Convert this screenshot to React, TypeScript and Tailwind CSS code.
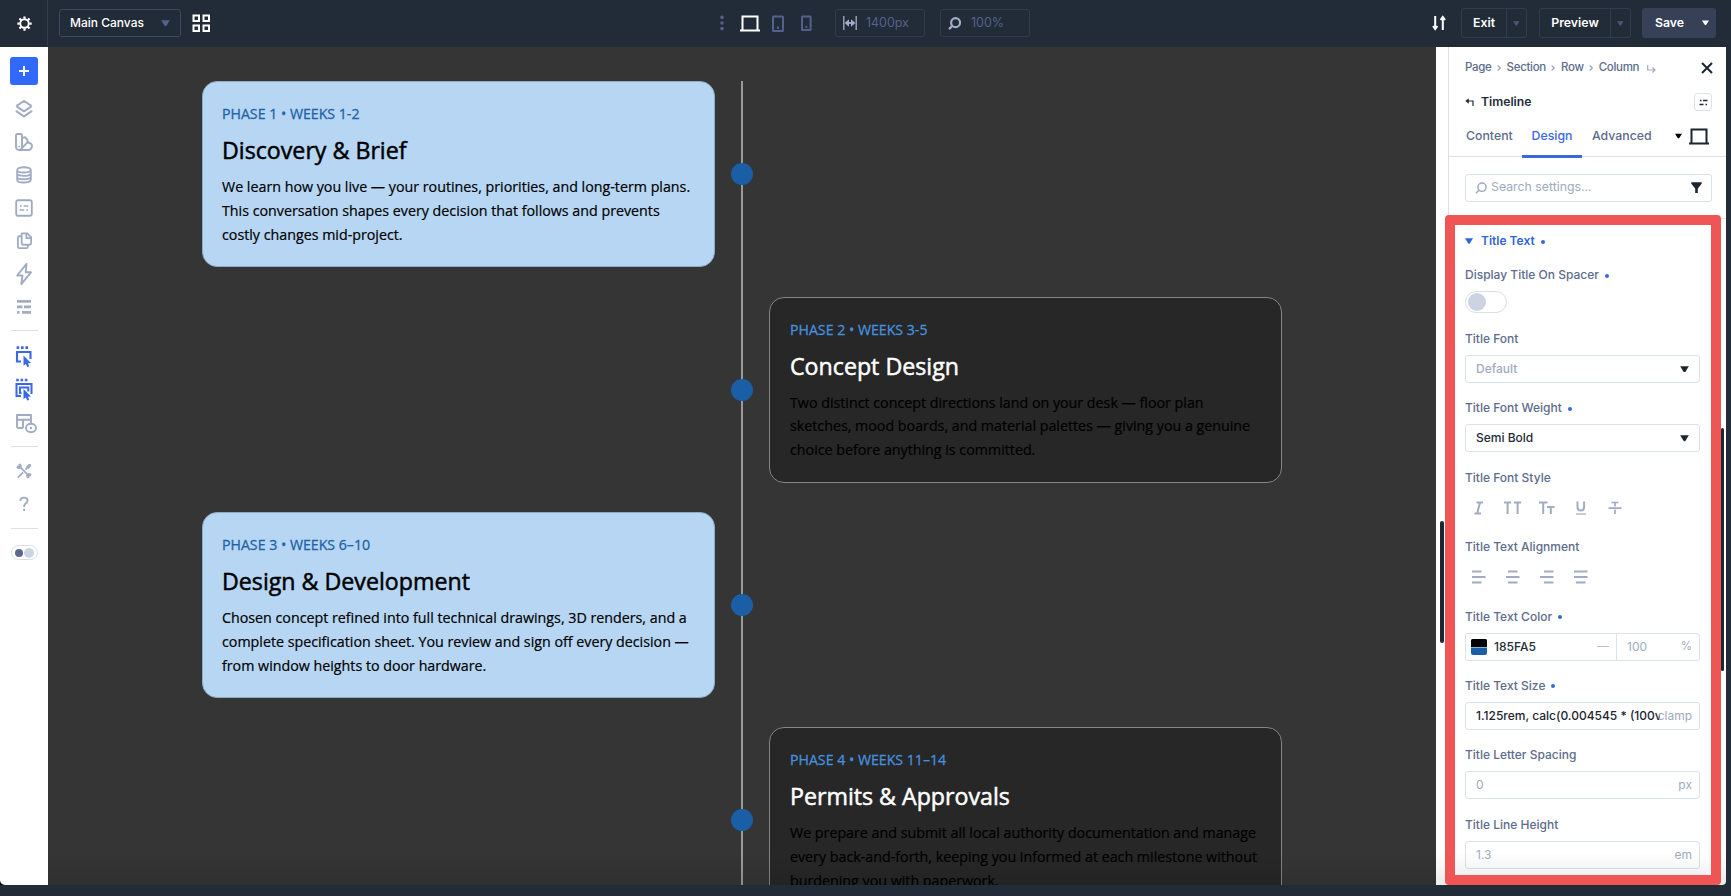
import type { ReactNode } from 'react';
import clsx from 'clsx';

const phases = [
  {
    label: 'PHASE 1 • WEEKS 1-2',
    title: 'Discovery & Brief',
    lines: [
      'We learn how you live — your routines, priorities, and long-term plans.',
      'This conversation shapes every decision that follows and prevents',
      'costly changes mid-project.',
    ],
  },
  {
    label: 'PHASE 2 • WEEKS 3-5',
    title: 'Concept Design',
    lines: [
      'Two distinct concept directions land on your desk — floor plan',
      'sketches, mood boards, and material palettes — giving you a genuine',
      'choice before anything is committed.',
    ],
  },
  {
    label: 'PHASE 3 • WEEKS 6–10',
    title: 'Design & Development',
    lines: [
      'Chosen concept refined into full technical drawings, 3D renders, and a',
      'complete specification sheet. You review and sign off every decision —',
      'from window heights to door hardware.',
    ],
  },
  {
    label: 'PHASE 4 • WEEKS 11–14',
    title: 'Permits & Approvals',
    lines: [
      'We prepare and submit all local authority documentation and manage',
      'every back-and-forth, keeping you informed at each milestone without',
      'burdening you with paperwork.',
    ],
  },
];

function Caret({ className }: { className?: string }) {
  return (
    <svg viewBox="0 0 8 6" className={clsx('shrink-0', className)} fill="currentColor">
      <path d="M0 .3h8L4.9 5.2q-.9 1-1.8 0z" />
    </svg>
  );
}

function Laptop({ className }: { className?: string }) {
  return (
    <svg viewBox="0 0 20 17" className={clsx('shrink-0', className)} fill="none" stroke="currentColor" strokeWidth="2">
      <path d="M2.5 15V1.5h15V15M0 15.5h20" />
    </svg>
  );
}

function SearchIcon({ className }: { className?: string }) {
  return (
    <svg viewBox="0 0 12 12" className={clsx('shrink-0', className)} fill="none" stroke="currentColor">
      <circle cx="7" cy="5.2" r="4.1" />
      <path d="M4 8.2L.9 11.2" />
    </svg>
  );
}

/* ---------- Top bar ---------- */

function SplitButton({ label, className }: { label: string; className: string }) {
  return (
    <div className={clsx('flex h-[30px] rounded-[3px] border border-[#303c4f] text-white', className)}>
      <span className="flex flex-1 items-center justify-center text-[12.3px] font-semibold">{label}</span>
      <span className="flex w-[20px] items-center justify-center border-l border-[#303c4f] text-[#4a5876]">
        <Caret className="h-[5px] w-[6.5px]" />
      </span>
    </div>
  );
}

function TopBar() {
  return (
    <header className="flex h-[47px] shrink-0 items-center pb-px">
      <div className="flex h-full w-12 shrink-0 items-center justify-center border-r border-[#2f3c4b] text-white">
        <svg viewBox="0 0 16 16" className="ml-px h-[15px] w-[15px]" fill="none" stroke="currentColor">
          <circle cx="8" cy="8" r="4.5" strokeWidth="2" />
          <path
            strokeWidth="2.4"
            d="M8 .4v2.6M8 13v2.6M.4 8H3M13 8h2.6M2.6 2.6l1.9 1.9M11.5 11.5l1.9 1.9M2.6 13.4l1.9-1.9M11.5 4.5l1.9-1.9"
          />
        </svg>
      </div>
      <div className="ml-[11px] flex h-7 w-[122px] items-center justify-between rounded-[3px] border border-[#3b4963] px-[10px]">
        <span className="whitespace-nowrap text-[12px] font-medium text-white">Main Canvas</span>
        <Caret className="h-[6.5px] w-[9px] text-[#53618c]" />
      </div>
      <svg viewBox="0 0 19 19" className="ml-[11px] h-[19px] w-[19px] text-white" fill="none" stroke="currentColor" strokeWidth="2">
        <path d="M1.5 1.5h5.5V7H1.5zM11.5 1.5h5.5V7h-5.5zM1.5 11.5h5.5V17H1.5zM11.5 11.5h5.5V17h-5.5z" />
      </svg>

      <div className="ml-[509px] flex items-center text-[#53618c]">
        <svg viewBox="0 0 4 16" className="h-4 w-1" fill="currentColor">
          <circle cx="2" cy="2.4" r="1.8" />
          <circle cx="2" cy="8" r="1.8" />
          <circle cx="2" cy="13.6" r="1.8" />
        </svg>
        <Laptop className="ml-4 h-[17px] w-5 text-white" />
        <svg viewBox="0 0 12 17" className="ml-3 h-[17px] w-3" fill="none" stroke="currentColor" strokeWidth="2">
          <rect x="1" y="1.5" width="10" height="14.5" rx=".5" />
          <path d="M6 11.5V14" />
        </svg>
        <svg viewBox="0 0 11 16" className="ml-[17px] h-4 w-[11px]" fill="none" stroke="currentColor" strokeWidth="2">
          <rect x="1" y="1.5" width="8.6" height="13.5" rx=".5" />
          <path d="M5.3 10.8v2" />
        </svg>
        <div className="ml-[23px] flex h-7 w-[90px] items-center rounded-[3px] border border-[#303c4f] pl-[7px]">
          <svg viewBox="0 0 14 14" className="h-[14px] w-[14px] text-[#a2aec8]" fill="none" stroke="currentColor">
            <path d="M.8 0v14M13.2 0v14" strokeWidth="1.3" />
            <path d="M3 7h8" strokeWidth="1.8" />
            <path d="M1.6 7L6 3.2v7.6zM12.4 7L8 3.2v7.6z" fill="currentColor" stroke="none" />
          </svg>
          <span className="ml-[9px] text-[12.5px] tracking-[-0.05px]">1400px</span>
        </div>
        <div className="ml-[15px] flex h-7 w-[90px] items-center rounded-[3px] border border-[#303c4f] pl-[7px]">
          <SearchIcon className="h-[13px] w-[13px] stroke-2 text-[#a2aec8]" />
          <span className="ml-[10px] text-[12.5px]">100%</span>
        </div>
      </div>

      <svg viewBox="0 0 14 16" className="ml-auto mr-[15px] h-4 w-[14px] text-white" fill="none" stroke="currentColor" strokeWidth="2">
        <path d="M3.2 1v13M1 11l2.2 3 2.2-3M10.8 15V2M8.6 5l2.2-3L13 5" />
      </svg>
      <SplitButton label="Exit" className="w-[66px]" />
      <SplitButton label="Preview" className="ml-3 w-[92px]" />
      <div className="ml-[11px] mr-[15px] flex h-[30px] w-[74px] items-center justify-between rounded-[3px] bg-[#364158] pl-[13px] pr-[7px] text-white">
        <span className="text-[12.3px] font-semibold">Save</span>
        <Caret className="h-[5.5px] w-[7px]" />
      </div>
    </header>
  );
}

/* ---------- Left rail ---------- */

function RailIcon({ children, active, className = 'h-[18px] w-[18px]' }: { children: ReactNode; active?: boolean; className?: string }) {
  return (
    <div className={clsx('flex h-[33.1px] w-7 items-center justify-center', active ? 'text-[#3a68e8]' : 'text-[#a2abc4]')}>
      <svg viewBox="0 0 18 18" className={clsx('overflow-visible', className)} fill="none" stroke="currentColor" strokeWidth="1.9" strokeLinejoin="round">
        {children}
      </svg>
    </div>
  );
}

function Divider({ className }: { className: string }) {
  return (
    <div className={clsx('flex items-center', className)}>
      <div className="h-px w-[27px] bg-[#dcdfe8]" />
    </div>
  );
}

function LeftRail() {
  return (
    <aside className="flex w-12 shrink-0 flex-col items-center rounded-bl-[5px] bg-white pt-[10px]">
      <div className="mb-[7px] flex h-[28px] w-[28px] shrink-0 items-center justify-center rounded-[3px] bg-[#3069fb]">
        <svg viewBox="0 0 10 10" className="h-[10px] w-[10px]" stroke="white" strokeWidth="1.9">
          <path d="M5 0v10M0 5h10" />
        </svg>
      </div>
      <RailIcon>
        <path d="M9 1l7 4.6v1L9 11.4 2 6.6v-1z" />
        <path d="M1.6 10.4v1L9 16.4l7.4-5v-1" />
      </RailIcon>
      <RailIcon>
        <path d="M7 4V14a3 3 0 0 1-6 0V2.5Q1 1 2.5 1H5.5Q7 1 7 2.5z" />
        <path d="M7 5.5l1.5-1q1.5-.8 2.5.6l1.5 2.2q.8 1.3-.4 2.3L6.5 15.5M12.5 9.5l1.8.3q3 1 2.7 3.5-.2 3-3.2 3.7H4" />
        <path d="M4 13v1.2" />
      </RailIcon>
      <RailIcon>
        <path d="M2.2 4v10c0 3.4 13.6 3.4 13.6 0V4M2.2 4c0-3.6 13.6-3.6 13.6 0s-13.6 3.2-13.6 0zM2.2 7.6c0 3 13.6 3 13.6 0M2.2 11c0 3 13.6 3 13.6 0" />
      </RailIcon>
      <RailIcon>
        <rect x="1.2" y="1.2" width="15.6" height="15.6" rx="2" />
        <path strokeWidth="1.7" d="M5 7h1.7M8.7 7h4.5M4.7 11h4.5M11.3 11H13" />
      </RailIcon>
      <RailIcon className="h-[17px] w-[17px]">
        <path d="M6 1.5h6l4 4V12q0 1.5-1.5 1.5H7.5Q6 13.5 6 12z" />
        <path d="M11 1.5V6.5h5M6 4.5H3.5Q2 4.5 2 6v9.5Q2 17 3.5 17h7.5q1.5 0 1.5-1.5v-2" />
      </RailIcon>
      <RailIcon>
        <path d="M11.5-1.2L2.2 10.5h5.3L6.3 19.2 16 7.3h-5.3z" />
      </RailIcon>
      <RailIcon>
        <path strokeWidth="2.8" strokeLinejoin="miter" d="M2 3.3h14M2 8.9h5.5M9 8.9h7M2 14.3h2.5M7 14.3h9" />
      </RailIcon>
      <Divider className="mb-[3px] h-[14px]" />
      <RailIcon active>
        <path strokeWidth="2.6" d="M1.6-.4h2.6M6-.4h2.6M10.4-.4h2.6" />
        <path strokeWidth="2.1" strokeLinejoin="miter" d="M6 13.5H2V4h13.5v7" />
        <path d="M8.5 7.5l7.5 7.5-3 .3 1.2 3-2 .8-1.3-3.2-2.4 1.6z" fill="currentColor" stroke="none" />
      </RailIcon>
      <RailIcon active>
        <path strokeWidth="2.6" d="M1.2-1h2.6M5.5-1h2.6M9.8-1h2.6" />
        <path strokeWidth="2" strokeLinejoin="miter" d="M6 15H1.5V3h15v10M6.5 12H4.9V6.4h8.4v4" />
        <path d="M8.5 8l7.5 7.5-3 .3 1.2 3-2 .8-1.3-3.2-2.4 1.6z" fill="currentColor" stroke="none" />
      </RailIcon>
      <RailIcon>
        <path d="M8 14H3.2Q2 14 2 12.8V1h14v8M2 5.8h14M8 6v8" />
        <ellipse cx="16" cy="14" rx="5" ry="4.2" fill="white" />
        <circle cx="16" cy="14" r="1.2" fill="currentColor" stroke="none" />
      </RailIcon>
      <Divider className="mb-0.5 h-[13px]" />
      <RailIcon className="h-4 w-4">
        <path strokeWidth="2" d="M2 16.5L8 10.5M10.5 7.5L16.5 1.5" />
        <path strokeWidth="2" d="M5 5l8 8M4 1v3H1M1 4.5q2.5 2.5 4.5.2Q6 2.5 4 1M14 17v-3h3M17 13.5q-2.5-2.5-4.5-.2Q12 15.5 14 17" />
        <path strokeWidth="3.6" d="M12.5 5.5l3.5-3.5" />
      </RailIcon>
      <RailIcon>
        <path d="M5.4 5q0-3.4 3.7-3.4 3.5 0 3.5 3 0 1.7-1.9 2.9Q9.1 8.5 9.1 10.4v.6M9.1 12.8v2.2" />
      </RailIcon>
      <Divider className="mb-0.5 h-[14px]" />
      <div className="mt-2 flex h-[15px] w-[27px] items-center justify-between rounded-full border border-[#d9dfe9] px-[3px]">
        <span className="h-[8px] w-[8px] rounded-full bg-[#5b678d]" />
        <span className="h-[10px] w-[10px] rounded-full bg-[#ccd3e1]" />
      </div>
    </aside>
  );
}

/* ---------- Canvas ---------- */

function PhaseCard({ phase, dark }: { phase: (typeof phases)[number]; dark: boolean }) {
  return (
    <article
      className={clsx(
        'flex h-[186px] w-[513px] shrink-0 flex-col rounded-[15px] border pr-5 pt-5',
        dark ? 'border-[#858585] bg-[#272727] pl-5' : 'border-[#8fa9c4] bg-[#b6d6f3] pl-[19px]'
      )}
    >
      <p
        className={clsx(
          'h-6 whitespace-nowrap text-[14.15px] leading-6 [-webkit-text-stroke:0.3px]',
          dark ? 'text-[#4590de]' : 'text-[#1f63a8]'
        )}
      >
        {phase.label}
      </p>
      <h2
        className={clsx(
          'mt-[8px] h-8 whitespace-nowrap text-[23.2px] leading-8 [-webkit-text-stroke:0.5px]',
          dark ? 'text-white' : 'text-black'
        )}
      >
        {phase.title}
      </h2>
      <p className="mt-[9px] text-[14.25px] leading-[23.8px] text-black [-webkit-text-stroke:0.2px]">
        {phase.lines.map((line) => (
          <span key={line} className="block whitespace-nowrap">
            {line}
          </span>
        ))}
      </p>
    </article>
  );
}

function Canvas() {
  return (
    <main className="relative flex min-w-0 flex-1 justify-center overflow-hidden bg-[#353535] pt-[34.4px] font-['Open_Sans',sans-serif]">
      <div className="relative flex w-[1080px] shrink-0 flex-col gap-[29.3px]">
        <div className="absolute left-[539px] top-0 h-[820px] w-[2px] bg-[#9a9a9a]" />
        {phases.map((phase, i) => (
          <section key={phase.title} className={clsx('relative flex shrink-0 items-center', i % 2 === 1 && 'justify-end')}>
            <PhaseCard phase={phase} dark={i % 2 === 1} />
            <span className="absolute left-[529px] top-[82px] h-[22px] w-[22px] rounded-full bg-[#1a5fa6]" />
          </section>
        ))}
      </div>
      <div className="absolute inset-x-0 bottom-0 h-8 bg-linear-to-t from-black/10 to-transparent" />
    </main>
  );
}

/* ---------- Settings panel ---------- */

function Field({ label, modified, className = 'mb-[17.4px]', children }: { label: string; modified?: boolean; className?: string; children: ReactNode }) {
  return (
    <div className={className}>
      <div className="mb-2 flex h-4 items-center text-[12px] font-medium text-[#5d6b8c]">
        <span className="whitespace-nowrap">{label}</span>
        {modified && <i className="ml-[6px] mt-px h-1 w-1 rounded-full bg-[#3569e0]" />}
      </div>
      {children}
    </div>
  );
}

const inputBox = 'flex h-7 w-[235px] items-center rounded-[3px] border border-[#dde1ea] text-[12px] font-medium';

function Select({ value, placeholder }: { value: string; placeholder?: boolean }) {
  return (
    <div className={clsx(inputBox, 'justify-between px-[10px]', placeholder ? 'text-[#a0aabf]' : 'text-[#222b37]')}>
      {value}
      <Caret className="h-[6.5px] w-[9px] text-[#1d2530]" />
    </div>
  );
}

function UnitInput({ value, unit }: { value: string; unit: string }) {
  return (
    <div className={clsx(inputBox, 'justify-between pl-[10px] pr-[7px] text-[#a0aabf]')}>
      <span className="font-normal">{value}</span>
      <span className="font-normal">{unit}</span>
    </div>
  );
}

function FontStyleIcons() {
  return (
    <div className="flex h-7 items-center pl-[5px] text-[#a2abc4]">
      <svg viewBox="0 0 160 18" className="h-[18px] w-[160px]" fill="none" stroke="currentColor" strokeWidth="2">
        <path d="M6.5 3.5h6.5M4.5 14.5h6.5M10 3.5L7.2 14.5" />
        <path d="M34 3.5h7.2M37.6 3.5V15M44 3.5h7.2M47.6 3.5V15" />
        <path d="M69 3.5h8.5M73.2 3.5V15M77 8h7.5M80.8 8v7" />
        <path d="M107.5 2.5v5.6q0 3.4 3.3 3.4t3.3-3.4V2.5" />
        <path d="M106 15h10" strokeWidth="1.2" />
        <path d="M141.5 3.5h7M145 3.5v4M145 10.5v4.5M138.5 9.2h13" strokeWidth="1.7" />
      </svg>
    </div>
  );
}

function AlignIcons() {
  return (
    <div className="flex h-7 items-center pl-[5px] text-[#a2abc4]">
      <svg viewBox="0 0 130 16" className="h-4 w-[130px]" fill="none" stroke="currentColor" strokeWidth="1.9">
        <path d="M2 2.5h9.5M2 8h13.5M2 13.5h9.5" />
        <path d="M38 2.5h9.5M36 8h13.5M38 13.5h9.5" />
        <path d="M74 2.5h9.5M70 8h13.5M74 13.5h9.5" />
        <path d="M104 2.5h13.5M104 8h13.5M106 13.5h9.5" />
      </svg>
    </div>
  );
}

function PanelHeader() {
  return (
    <div className="h-[110px] shrink-0 border-b border-[#dcdfe8]">
      <div className="flex h-[42px] items-center pl-4 pr-[13px] text-[11.5px] font-medium tracking-[-0.3px] text-[#5d6b8c]">
        {['Page', 'Section', 'Row', 'Column'].map((crumb, i) => (
          <span key={crumb} className="flex items-center">
            {i > 0 && (
              <svg viewBox="0 0 4 6" className="mx-[5.5px] h-[6px] w-[4px]" fill="none" stroke="#9aa4bd" strokeWidth="1.2">
                <path d="M.6 .5L3.3 3 .6 5.5" />
              </svg>
            )}
            {crumb}
          </span>
        ))}
        <svg viewBox="0 0 9 8" className="ml-2 mt-px h-2 w-[9px]" fill="none" stroke="#a2abc4" strokeWidth="1.2">
          <path d="M.7 0v5h7M5.5 2.5L8 5 5.5 7.5" />
        </svg>
        <svg viewBox="0 0 12 12" className="ml-auto h-3 w-3" stroke="#1d2530" strokeWidth="2">
          <path d="M1 1l10 10M11 1L1 11" />
        </svg>
      </div>
      <div className="flex h-[26px] items-center pl-4 pr-[14px]">
        <svg viewBox="0 0 9 8" className="h-2 w-[9px]" fill="none" stroke="#222b37" strokeWidth="1.2">
          <path d="M8 8V3H1.5" />
          <path d="M3.8 .3v5.4L.3 3z" fill="#222b37" stroke="none" />
        </svg>
        <span className="ml-[7px] text-[12.2px] font-semibold text-[#222b37]">Timeline</span>
        <div className="ml-auto flex h-[18px] w-[18px] items-center justify-center rounded-[3px] border border-[#dde1ea]">
          <svg viewBox="0 0 9 7" className="h-[7px] w-[9px]" stroke="#222b37" strokeWidth="1.6">
            <path d="M1 1.5h1.5M4 1.5h4.5M.5 5.5h4M6.5 5.5H8" />
          </svg>
        </div>
      </div>
      <div className="flex h-[42px] items-stretch pl-4 pr-[17px] text-[12.3px] font-medium text-[#5d6b8c]">
        <span className="flex w-[57px] items-center pl-px">Content</span>
        <span className="relative flex w-[60px] items-center justify-center text-[#3a68e8]">
          Design
          <i className="absolute inset-x-0 -bottom-px h-[3px] bg-[#3a68d8]" />
        </span>
        <span className="flex items-center pl-[10px]">Advanced</span>
        <span className="ml-auto flex items-center gap-[7px] text-[#1d2530]">
          <Caret className="h-[6px] w-[7px] text-black" />
          <Laptop className="h-[17px] w-5" />
        </span>
      </div>
    </div>
  );
}

function SettingsPanel() {
  return (
    <aside className="relative flex w-[290px] shrink-0 rounded-br-[4px] bg-white">
      <div className="w-3 shrink-0 pl-[4px] pt-[474px]">
        <div className="h-[122px] w-[4px] rounded-full bg-[#1d2733]" />
      </div>
      <div className="flex min-w-0 flex-1 flex-col overflow-hidden border-l border-[#dcdfe8]">
        <PanelHeader />
        <div className="flex h-[62px] shrink-0 items-center border-b border-[#e4e7ee] pl-4">
          <div className="flex h-7 w-[247px] items-center rounded-[3px] border border-[#dde1ea] px-[9px] text-[12.3px] text-[#a0aabf]">
            <SearchIcon className="h-3 w-3 stroke-[1.5px]" />
            <span className="ml-1">Search settings...</span>
            <svg viewBox="0 0 11 11" className="ml-auto h-[11px] w-[11px]" fill="#1d2530">
              <path d="M.3 .3h10.4v1.4L6.8 6.5V11H4.2V6.5L.3 1.7z" />
            </svg>
          </div>
        </div>
        <div className="pl-4 pt-[14px]">
          <div className="mb-[18px] flex h-4 items-center text-[12px] font-semibold text-[#3063dc]">
            <Caret className="h-[6px] w-[8px]" />
            <span className="ml-2">Title Text</span>
            <i className="ml-[6px] mt-px h-1 w-1 rounded-full bg-[#3569e0]" />
          </div>
          <Field label="Display Title On Spacer" modified className="mb-[18px]">
            <div className="flex h-[22px] w-[42px] items-center rounded-full border border-[#d9dfe9] px-[2px]">
              <span className="h-[18px] w-[18px] rounded-full bg-[#ccd3e1]" />
            </div>
          </Field>
          <Field label="Title Font">
            <Select value="Default" placeholder />
          </Field>
          <Field label="Title Font Weight" modified>
            <Select value="Semi Bold" />
          </Field>
          <Field label="Title Font Style">
            <FontStyleIcons />
          </Field>
          <Field label="Title Text Alignment">
            <AlignIcons />
          </Field>
          <Field label="Title Text Color" modified>
            <div className={inputBox}>
              <span className="ml-[5px] flex h-4 w-4 flex-col overflow-hidden rounded-[2px] bg-[#1a5fa6]">
                <i className="h-[9px] border-b border-[#8fb1d6] bg-black" />
              </span>
              <span className="ml-[7px] text-[12px] text-[#222b37]">185FA5</span>
              <i className="ml-auto mr-[7px] h-px w-3 bg-[#b7bfd0]" />
              <span className="flex h-full w-[83px] items-center justify-between border-l border-[#dde1ea] pl-[10px] pr-[7px] font-normal text-[#a0aabf]">
                <span>100</span>
                <span className="text-[11.5px]">%</span>
              </span>
            </div>
          </Field>
          <Field label="Title Text Size" modified>
            <div className={clsx(inputBox, 'pl-[10px] pr-[7px]')}>
              <span className="w-[184px] shrink-0 overflow-hidden whitespace-nowrap text-[#1d2530]">
                1.125rem, calc(0.004545 * (100vw
              </span>
              <span className="-ml-1 flex-1 text-right font-normal text-[#a0aabf]">clamp</span>
            </div>
          </Field>
          <Field label="Title Letter Spacing">
            <UnitInput value="0" unit="px" />
          </Field>
          <Field label="Title Line Height">
            <UnitInput value="1.3" unit="em" />
          </Field>
        </div>
      </div>
      <div className="absolute inset-x-0 bottom-0 h-8 bg-linear-to-t from-black/8 to-transparent" />
      <div className="absolute right-[2px] top-[381px] h-[243px] w-[3px] rounded-full bg-[#1d2733]" />
      {/* Highlight around the Title Text group */}
      <div className="absolute bottom-0 left-[9px] right-[5px] top-[167.5px] overflow-hidden rounded-[4px]">
        <div className="h-full w-full border-[10px] border-[#ef5555]" />
      </div>
    </aside>
  );
}

export default function App() {
  return (
    <div className="flex h-[896px] w-[1731px] flex-col overflow-hidden bg-[#222c38] font-['Inter',sans-serif]">
      <TopBar />
      <div className="flex h-[838px] shrink-0 pr-[5px]">
        <div className="flex shrink-0 bg-black">
          <LeftRail />
        </div>
        <Canvas />
        <SettingsPanel />
      </div>
    </div>
  );
}
